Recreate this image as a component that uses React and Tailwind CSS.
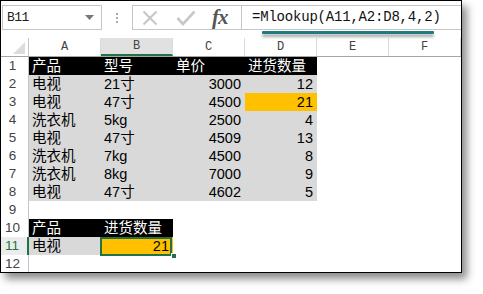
import React from "react";

const CJK = { fontFamily: '"Liberation Sans", "Noto Sans CJK SC", sans-serif' };
const MONO = { fontFamily: '"Liberation Mono", "Noto Sans CJK SC", monospace' };

const cols = ["A", "B", "C", "D", "E", "F"];

// each row: array of 6 cells {t, bg, align, color}
const G = "bg-[#d9d9d9]";
const K = "bg-black";
const O = "bg-[#ffc000]";

const rows = [
  [
    { t: "产品", bg: K, c: "text-white" },
    { t: "型号", bg: K, c: "text-white" },
    { t: "单价", bg: K, c: "text-white" },
    { t: "进货数量", bg: K, c: "text-white" },
  ],
  [{ t: "电视", bg: G }, { t: "21寸", bg: G }, { t: "3000", bg: G, r: 1 }, { t: "12", bg: G, r: 1 }],
  [{ t: "电视", bg: G }, { t: "47寸", bg: G }, { t: "4500", bg: G, r: 1 }, { t: "21", bg: O, r: 1 }],
  [{ t: "洗衣机", bg: G }, { t: "5kg", bg: G }, { t: "2500", bg: G, r: 1 }, { t: "4", bg: G, r: 1 }],
  [{ t: "电视", bg: G }, { t: "47寸", bg: G }, { t: "4509", bg: G, r: 1 }, { t: "13", bg: G, r: 1 }],
  [{ t: "洗衣机", bg: G }, { t: "7kg", bg: G }, { t: "4500", bg: G, r: 1 }, { t: "8", bg: G, r: 1 }],
  [{ t: "洗衣机", bg: G }, { t: "8kg", bg: G }, { t: "7000", bg: G, r: 1 }, { t: "9", bg: G, r: 1 }],
  [{ t: "电视", bg: G }, { t: "47寸", bg: G }, { t: "4602", bg: G, r: 1 }, { t: "5", bg: G, r: 1 }],
  [],
  [
    { t: "产品", bg: K, c: "text-white" },
    { t: "进货数量", bg: K, c: "text-white" },
  ],
  [{ t: "电视", bg: G }, { t: "21", bg: O, r: 1, sel: 1 }],
  [],
];

function Cell({ cell }) {
  const c = cell || {};
  return (
    <div
      className={`relative w-[72px] h-[18px] shrink-0 flex items-end pb-[1px] text-[14.5px] leading-[16px] ${
        c.bg || ""
      } ${c.c || "text-black"} ${c.r ? "justify-end pr-[4px]" : "justify-start pl-[3px]"}`}
      style={CJK}
    >
      {c.t}
      {c.sel ? (
        <>
          <div className="absolute left-[-1px] top-[0px] w-[72px] h-[19px] border-2 border-[#217346]" />
          <div className="absolute right-[-4px] bottom-[-4px] w-[6px] h-[6px] bg-[#217346] border border-white" />
        </>
      ) : null}
    </div>
  );
}

export default function App() {
  return (
    <div className="w-[483px] h-[294px] bg-white relative overflow-hidden">
      <div className="w-[462px] h-[273px] border border-black bg-white shadow-[5px_6px_8px_rgba(0,0,0,0.45)] overflow-hidden flex flex-col">
        {/* toolbar */}
        <div className="h-[37px] shrink-0 flex items-start pt-[4px] relative">
          <div className="ml-[1px] w-[100px] h-[25px] border border-[#c6c6c6] flex items-center justify-between">
            <span className="pl-[4px] text-[13px] tracking-[-0.5px] text-[#222]" style={MONO}>
              B11
            </span>
            <svg width="9" height="5" viewBox="0 0 9 5" className="mr-[7px]">
              <path d="M0 0 L9 0 L4.5 5 Z" fill="#777" />
            </svg>
          </div>
          <div className="w-[30px] h-[25px] flex flex-col items-center justify-center gap-[2px]">
            <div className="w-[2px] h-[2px] bg-[#aaa]" />
            <div className="w-[2px] h-[2px] bg-[#aaa]" />
            <div className="w-[2px] h-[2px] bg-[#aaa]" />
          </div>
          <div className="w-[110px] h-[25px] border border-[#c6c6c6] flex items-center">
            <svg width="16" height="16" viewBox="0 0 16 16" className="ml-[9px]">
              <path d="M1.5 1.5 L14.5 14.5 M14.5 1.5 L1.5 14.5" stroke="#c8c8c8" strokeWidth="2.2" />
            </svg>
            <svg width="20" height="16" viewBox="0 0 20 16" className="ml-[18px]">
              <path d="M1.5 8 L7 14 L18.5 1.5" stroke="#c8c8c8" strokeWidth="2.6" fill="none" />
            </svg>
            <span
              className="ml-[16px] text-[21px] italic font-bold text-[#555] leading-none tracking-[-1px]"
              style={{ fontFamily: '"Liberation Serif", serif' }}
            >
              fx
            </span>
          </div>
          <div className="flex-1 h-[25px] border-y border-[#c6c6c6] flex items-center pl-[10px]">
            <span className="text-[14px] tracking-[-0.2px] text-[#111]" style={MONO}>
              =Mlookup(A11,A2:D8,4,2)
            </span>
          </div>
          {/* annotation underline */}
          <div className="absolute left-[261px] top-[30px] w-[172px] h-[3px] bg-[#1f7b7d] rounded-[1px] shadow-[0_3px_3px_rgba(0,0,0,0.35)]" />
        </div>

        {/* column header */}
        <div className="h-[19px] shrink-0 flex border-b border-[#a6a6a6]">
          <div className="w-[28px] shrink-0 border-r border-[#c6c6c6] relative">
            <svg width="12" height="12" viewBox="0 0 12 12" className="absolute right-[3px] bottom-[2px]">
              <path d="M12 0 L12 12 L0 12 Z" fill="#dcdcdc" />
            </svg>
          </div>
          {cols.map((c) => (
            <div
              key={c}
              className={`w-[72px] shrink-0 flex items-center justify-center text-[12px] text-[#444] border-r border-[#dadada] ${
                c === "B" ? "bg-[#e1e1e1] border-b-2 border-b-[#217346]" : ""
              }`}
              style={MONO}
            >
              {c}
            </div>
          ))}
        </div>

        {/* rows */}
        {rows.map((r, i) => {
          const n = i + 1;
          const active = n === 11;
          return (
            <div key={n} className="h-[18px] shrink-0 flex">
              <div
                className={`w-[28px] shrink-0 flex items-center justify-center pr-[4px] text-[13.5px] leading-none ${
                  active ? "text-[#217346] bg-[#ececec] border-r-2 border-[#217346]" : "text-[#444] border-r border-[#c6c6c6]"
                }`}
                style={{ fontFamily: '"Liberation Sans", sans-serif' }}
              >
                {n}
              </div>
              {cols.map((c, j) => (
                <Cell key={c} cell={r[j]} />
              ))}
            </div>
          );
        })}
      </div>
    </div>
  );
}
